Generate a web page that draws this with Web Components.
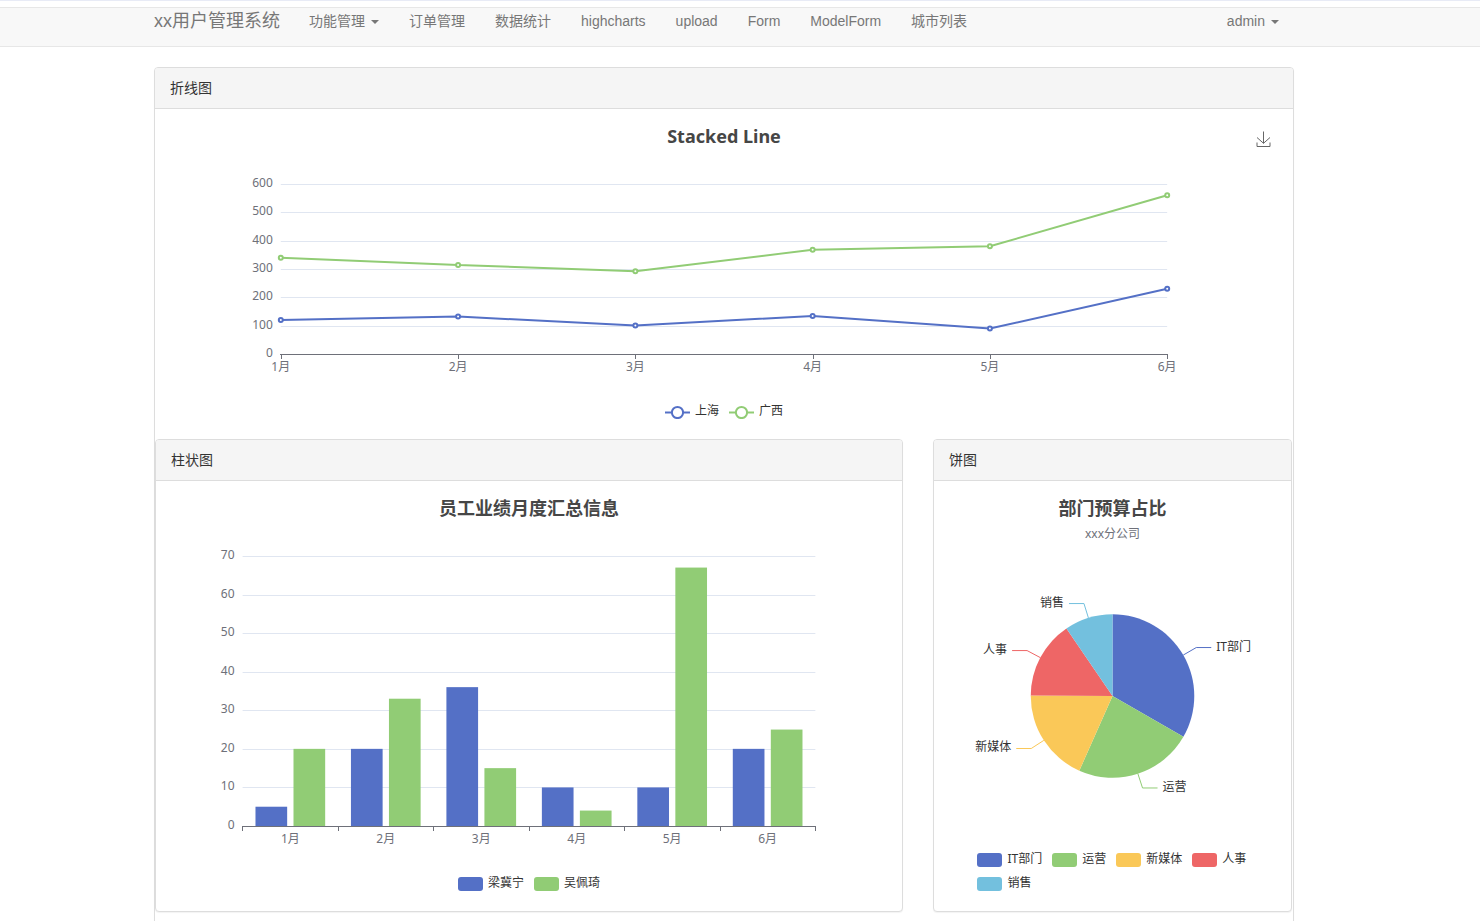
<!DOCTYPE html>
<html lang="zh-CN">
<head>
<meta charset="utf-8">
<title>xx用户管理系统</title>
<style>
  html, body { margin: 0; }
  body { font: 14px/20px "Liberation Sans", "Noto Sans CJK SC", sans-serif; color: #333; background: #fff; }
</style>
</head>
<body>
<app-shell>
  <nav-bar slot="nav" brand="xx用户管理系统">
    <nav-item menu>功能管理</nav-item>
    <nav-item>订单管理</nav-item>
    <nav-item>数据统计</nav-item>
    <nav-item>highcharts</nav-item>
    <nav-item>upload</nav-item>
    <nav-item>Form</nav-item>
    <nav-item>ModelForm</nav-item>
    <nav-item>城市列表</nav-item>
    <nav-item menu slot="end">admin</nav-item>
  </nav-bar>
  <panel-box>
    <span slot="heading">折线图</span>
    <line-chart heading="Stacked Line" height="252" max="600" step="100" download
      labels='["1月","2月","3月","4月","5月","6月"]'
      series='[{"name":"上海","data":[120,132,101,134,90,230]},{"name":"广西","data":[220,182,191,234,290,330]}]'></line-chart>
    <chart-row slot="after">
      <panel-box>
        <span slot="heading">柱状图</span>
        <bar-chart heading="员工业绩月度汇总信息" height="352" max="70" step="10"
          labels='["1月","2月","3月","4月","5月","6月"]'
          series='[{"name":"梁冀宁","data":[5,20,36,10,10,20]},{"name":"吴佩琦","data":[20,33,15,4,67,25]}]'></bar-chart>
      </panel-box>
      <panel-box>
        <span slot="heading">饼图</span>
        <pie-chart heading="部门预算占比" subheading="xxx分公司" height="300"
          series='[{"name":"IT部门","value":1048},{"name":"运营","value":735},{"name":"新媒体","value":580},{"name":"人事","value":484},{"name":"销售","value":300}]'></pie-chart>
      </panel-box>
    </chart-row>
  </panel-box>
</app-shell>

<script>
const COLORS = ["#5470c6", "#91cc75", "#fac858", "#ee6666", "#73c0de"];

function shadow(el, html) {
  const root = el.attachShadow({ mode: "open" });
  const t = document.createElement("template");
  t.innerHTML = html;
  root.append(t.content.cloneNode(true));
  return root;
}

class AppShell extends HTMLElement {
  constructor() {
    super();
    shadow(this, `
      <style>
        :host { display: block; height: 100vh; overflow: auto; scrollbar-width: none; box-sizing: border-box; border-top: 1px solid #e8ebf6; padding-top: 6px; }
        main { padding: 20px 32px 20px 0; }
        .container { max-width: 1140px; margin: 0 auto; }
      </style>
      <slot name="nav"></slot>
      <main><div class="container"><slot></slot></div></main>`);
  }
}

class NavBar extends HTMLElement {
  constructor() {
    super();
    const root = shadow(this, `
      <style>
        :host { display: block; background: #f8f8f8; border: solid #e7e7e7; border-width: 1px 0; padding-right: 32px; }
        nav { display: flex; max-width: 1140px; margin: 0 auto; padding: 3px 0 15px; }
        .brand { font-size: 18px; line-height: 20px; color: #777; text-decoration: none; padding-right: 14px; white-space: nowrap; }
        .end { margin-left: auto; }
      </style>
      <nav><a class="brand" href="#"></a><slot></slot><div class="end"><slot name="end"></slot></div></nav>`);
    root.querySelector(".brand").textContent = this.getAttribute("brand");
  }
}

class NavItem extends HTMLElement {
  constructor() {
    super();
    const menu = this.hasAttribute("menu");
    shadow(this, `
      <style>
        :host { display: block; }
        a, button { display: flex; align-items: center; gap: 6px; padding: 0 15px; margin: 0; border: 0; background: none; font: inherit; line-height: 20px; color: #777; text-decoration: none; white-space: nowrap; cursor: pointer; }
        i { border: 4px solid transparent; border-top-color: #777; border-bottom: 0; margin-top: 2px; }
      </style>
      ${menu ? '<button type="button" aria-haspopup="true"><slot></slot><i></i></button>' : '<a href="#"><slot></slot></a>'}`);
  }
}

class PanelBox extends HTMLElement {
  constructor() {
    super();
    shadow(this, `
      <style>
        :host { display: block; border: 1px solid #ddd; border-radius: 4px; background: #fff; box-shadow: 0 1px 1px rgba(0,0,0,.05); min-width: 0; }
        header { padding: 10px 15px; line-height: 20px; background: #f5f5f5; border-bottom: 1px solid #ddd; border-radius: 3px 3px 0 0; }
        .body { padding: 15px; }
      </style>
      <header><slot name="heading"></slot></header>
      <div class="body"><slot></slot></div>
      <slot name="after"></slot>`);
  }
}

class ChartRow extends HTMLElement {
  constructor() {
    super();
    shadow(this, `
      <style>
        :host { display: grid; grid-template-columns: 25fr 12fr; gap: 30px; padding: 0 1px 20px 0; }
      </style>
      <slot></slot>`);
  }
}

/* Shared frame of all charts: title, plot area, legend. */
class BaseChart extends HTMLElement {
  constructor() {
    super();
    const root = shadow(this, `
      <style>
        :host { display: block; position: relative; font: 12px/24px "Noto Sans", "Noto Sans CJK SC", sans-serif; }
        h2 { margin: 0; font-size: 18px; line-height: 24px; font-weight: bold; color: #464646; text-align: center; }
        p { margin: 0; line-height: 28px; color: #6e7079; text-align: center; }
        svg { display: block; }
        .plot { width: 100%; overflow: visible; }
        text { font-size: 12px; fill: #6e7079; }
        text.label { fill: #333; }
        ul { display: flex; flex-wrap: wrap; justify-content: center; column-gap: 10px; margin: 0; padding: 0; list-style: none; }
        :host(pie-chart) ul { max-width: 270px; margin: 0 auto; justify-content: flex-start; }
        li { display: flex; align-items: center; gap: 5px; line-height: 24px; color: #333; }
        .key { width: 25px; height: 14px; border-radius: 3px; }
        .name { line-height: 22px; padding-bottom: 2px; }
        .save { position: absolute; top: 7px; right: 7px; padding: 0; border: 0; background: none; cursor: pointer; }
      </style>
      <h2></h2>
      <svg class="plot" role="img"></svg>
      <ul></ul>`);
    this.series = JSON.parse(this.getAttribute("series"));
    this.labels = JSON.parse(this.getAttribute("labels") || "[]");
    this.h = Number(this.getAttribute("height"));
    this.max = Number(this.getAttribute("max"));
    this.step = Number(this.getAttribute("step"));
    const title = root.querySelector("h2");
    title.textContent = this.getAttribute("heading");
    if (this.hasAttribute("subheading")) {
      const p = document.createElement("p");
      p.textContent = this.getAttribute("subheading");
      title.after(p);
    }
    if (this.hasAttribute("download")) {
      title.insertAdjacentHTML("afterend", `<button class="save" type="button" aria-label="Save as image">
        <svg width="15" height="16" viewBox="0 0 15 16" fill="none" stroke="#666"><path d="M1 6.5 7.500 12.300 14 6.500M7.500 12.300V.5M1 11.500V15.500H14V11.500"/></svg></button>`);
    }
    root.querySelector("ul").innerHTML = this.series.map((s, i) =>
      `<li>${this.key(COLORS[i])}<span class="name">${s.name}</span></li>`).join("");
    this.plot = root.querySelector(".plot");
    this.plot.setAttribute("height", this.h);
    this.plot.setAttribute("aria-label", this.getAttribute("heading"));
  }
  connectedCallback() {
    this.render();
    new ResizeObserver(() => this.render()).observe(this);
  }
  render() {
    const w = this.getBoundingClientRect().width;
    if (w) this.plot.innerHTML = this.draw(w);
  }
  key(color) { return `<span class="key" style="background:${color}"></span>`; }

  /* Cartesian grid: 10% side margins, horizontal rules, ticks and labels. */
  grid(w, ticks, centers) {
    const left = w * 0.1, right = w * 0.9, top = 36, bottom = this.h - 46;
    this.y = v => bottom - v / this.max * (bottom - top);
    let rules = "", axis = "";
    for (let v = 0; v <= this.max; v += this.step) {
      const y = Math.round(this.y(v));
      if (v) rules += `<path d="M${left} ${y + .5}H${right}" stroke="#e0e6f1"/>`;
      axis += `<text x="${left - 8}" y="${y + 3}" text-anchor="end">${v}</text>`;
    }
    axis += `<path d="M${Math.floor(left)} ${bottom + .5}H${Math.ceil(right)}" stroke="#6e7079"/>`;
    for (const x of ticks) axis += `<path d="M${Math.round(x) + .5} ${bottom}v5" stroke="#6e7079"/>`;
    centers.forEach((x, i) => axis += `<text x="${x}" y="${bottom + 17}" text-anchor="middle">${this.labels[i]}</text>`);
    return { rules, axis };
  }
}

class LineChart extends BaseChart {
  key(color) {
    return `<svg width="25" height="14" fill="none" stroke="${color}" stroke-width="2"><path d="M0 7.500H25"/><circle cx="12.500" cy="7.500" r="5.600" fill="#fff"/></svg>`;
  }
  draw(w) {
    const xs = this.labels.map((_, i) => w * (0.1 + 0.8 * i / (this.labels.length - 1)));
    const { rules, axis } = this.grid(w, xs, xs);
    const total = xs.map(() => 0);
    let out = rules + axis;
    this.series.forEach((s, k) => {
      const pts = s.data.map((v, i) => [xs[i], this.y(total[i] += v)]);
      out += `<polyline points="${pts.join(" ")}" fill="none" stroke="${COLORS[k]}" stroke-width="2" stroke-linejoin="bevel"/>`;
      for (const [x, y] of pts) out += `<circle cx="${x}" cy="${y}" r="2" fill="#fff" stroke="${COLORS[k]}" stroke-width="2"/>`;
    });
    return out;
  }
}

class BarChart extends BaseChart {
  draw(w) {
    const n = this.labels.length, band = w * 0.8 / n, left = w * 0.1;
    const ticks = Array.from({ length: n + 1 }, (_, i) => left + band * i - .4);
    const { rules, axis } = this.grid(w, ticks, this.labels.map((_, i) => left + band * (i + .5)));
    const bar = band * 0.73 / 2.2;
    let bars = "";
    this.series.forEach((s, k) => s.data.forEach((v, i) => {
      const x = left + band * (i + 0.135) + k * bar * 1.2, y = this.y(v);
      bars += `<rect x="${x}" y="${y}" width="${bar}" height="${this.y(0) - y}" fill="${COLORS[k]}"/>`;
    }));
    return rules + bars + axis;
  }
}

class PieChart extends BaseChart {
  draw(w) {
    const r = Math.min(w, 400) / 4, cx = w / 2, cy = this.h / 2 - 2;
    const sum = this.series.reduce((a, s) => a + s.value, 0);
    const at = (a, d) => [cx + Math.sin(a) * d, cy - Math.cos(a) * d];
    let a = 0, out = "";
    this.series.forEach((s, k) => {
      const b = a + s.value / sum * 2 * Math.PI, mid = (a + b) / 2;
      const dir = mid < Math.PI ? 1 : -1;
      const [ex, ey] = at(mid, r + 15);
      out += `<path d="M${cx} ${cy}L${at(a, r)}A${r} ${r} 0 ${b - a > Math.PI ? 1 : 0} 1 ${at(b, r)}Z" fill="${COLORS[k]}"/>
        <path d="M${at(mid, r)}L${ex} ${ey}h${15 * dir}" fill="none" stroke="${COLORS[k]}"/>
        <text class="label" x="${ex + 20 * dir}" y="${Math.round(ey + 3)}" text-anchor="${dir > 0 ? "start" : "end"}">${s.name}</text>`;
      a = b;
    });
    return out;
  }
}

customElements.define("app-shell", AppShell);
customElements.define("nav-bar", NavBar);
customElements.define("nav-item", NavItem);
customElements.define("panel-box", PanelBox);
customElements.define("chart-row", ChartRow);
customElements.define("line-chart", LineChart);
customElements.define("bar-chart", BarChart);
customElements.define("pie-chart", PieChart);
</script>
</body>
</html>
